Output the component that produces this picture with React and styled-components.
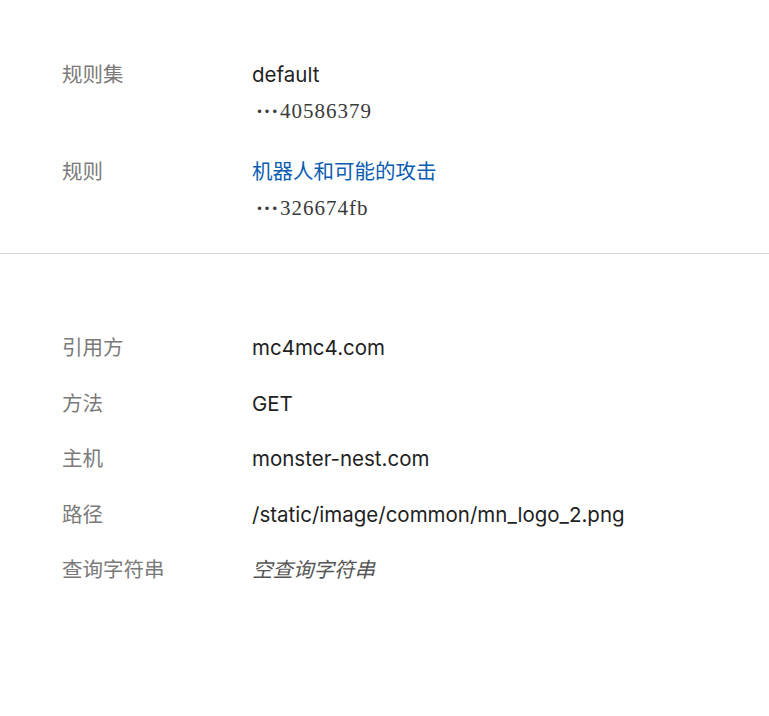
import React from 'react';
import styled, { createGlobalStyle } from 'styled-components';

const GlobalStyle = createGlobalStyle`
  html, body {
    margin: 0;
    padding: 0;
    background: #ffffff;
  }
  body {
    font-family: Inter, "Noto Sans CJK SC", sans-serif;
    color: #1f1f1f;
  }
`;

const Page = styled.div`
  width: 769px;
  min-height: 716px;
  background: #fff;
`;

const Section = styled.section`
  display: flex;
  flex-direction: column;
  gap: ${({ gap }) => gap}px;
  padding: ${({ pad }) => pad};
  border-bottom: ${({ divided }) => (divided ? '1px solid #d9d9d9' : 'none')};
`;

const Row = styled.div`
  display: grid;
  grid-template-columns: 190px 1fr;
  padding-left: 62px;
  font-size: 20.5px;
  line-height: 36px;
`;

const Label = styled.div`
  color: #7a7a7a;
`;

const Values = styled.div`
  display: flex;
  flex-direction: column;
`;

const Value = styled.div`
  color: ${({ muted }) => (muted ? '#555' : '#1f1f1f')};
  font-style: ${({ muted }) => (muted ? 'italic' : 'normal')};
`;

const Link = styled.a`
  color: #0b5cb3;
  text-decoration: none;
  cursor: pointer;
`;

const Hash = styled.div`
  display: flex;
  align-items: baseline;
  font-family: "Liberation Serif", serif;
  font-size: 21px;
  letter-spacing: 1px;
  color: #3a3a3a;
`;

const Dots = styled.span`
  display: inline-block;
  width: 28px;
  padding-left: 4px;
  box-sizing: border-box;
  letter-spacing: 0.6px;
  font-weight: bold;
`;

const rules = [
  { label: '规则集', value: 'default', hash: '40586379' },
  { label: '规则', value: '机器人和可能的攻击', hash: '326674fb', link: true },
];

const request = [
  { label: '引用方', value: 'mc4mc4.com' },
  { label: '方法', value: 'GET' },
  { label: '主机', value: 'monster-nest.com' },
  { label: '路径', value: '/static/image/common/mn_logo_2.png' },
  { label: '查询字符串', value: '空查询字符串', muted: true },
];

export default function App() {
  return (
    <Page>
      <GlobalStyle />
      <Section gap={25} pad="57px 0 27px" divided>
        {rules.map((r) => (
          <Row key={r.label}>
            <Label>{r.label}</Label>
            <Values>
              {r.link ? <Link>{r.value}</Link> : <Value>{r.value}</Value>}
              <Hash>
                <Dots>···</Dots>
                {r.hash}
              </Hash>
            </Values>
          </Row>
        ))}
      </Section>
      <Section gap={19.5} pad="76px 0 0">
        {request.map((r) => (
          <Row key={r.label}>
            <Label>{r.label}</Label>
            <Value muted={r.muted}>{r.value}</Value>
          </Row>
        ))}
      </Section>
    </Page>
  );
}
